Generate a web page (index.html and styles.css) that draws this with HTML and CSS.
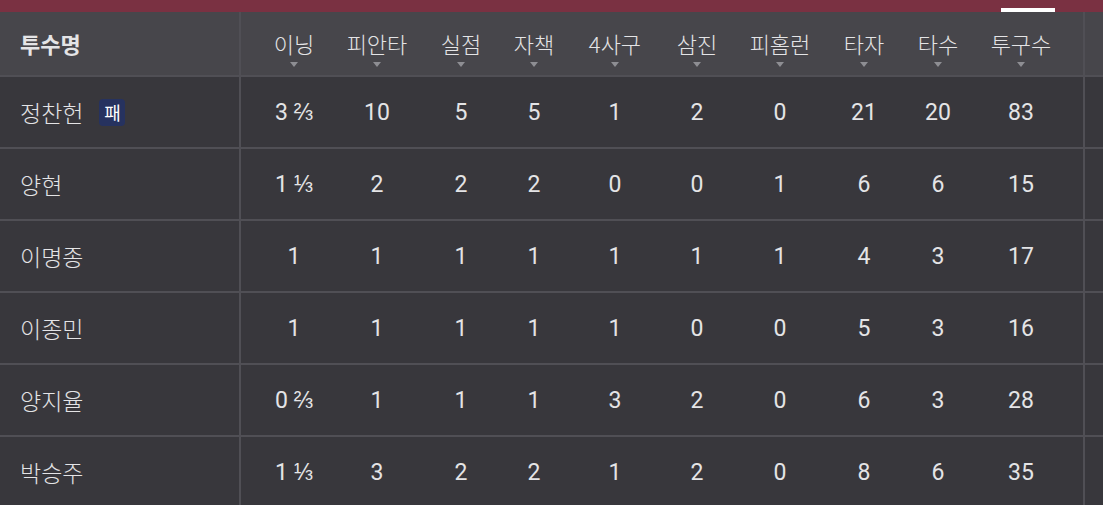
FILE: index.html
```html
<!DOCTYPE html>
<html lang="ko">
<head>
  <meta charset="UTF-8">
  <meta name="viewport" content="width=device-width, initial-scale=1.0">
  <title>투수 기록</title>
  <link rel="stylesheet" href="styles.css">
</head>
<body>
  <!-- 상단 탭 바 -->
  <div class="tabbar">
    <span class="tab-activo"></span>
  </div>

  <div class="tabla">
    <div class="fila cabecera">
      <div class="celda nombre">투수명</div>
      <div class="celda">이닝<span class="flecha"></span></div>
      <div class="celda">피안타<span class="flecha"></span></div>
      <div class="celda">실점<span class="flecha"></span></div>
      <div class="celda">자책<span class="flecha"></span></div>
      <div class="celda">4사구<span class="flecha"></span></div>
      <div class="celda">삼진<span class="flecha"></span></div>
      <div class="celda">피홈런<span class="flecha"></span></div>
      <div class="celda">타자<span class="flecha"></span></div>
      <div class="celda">타수<span class="flecha"></span></div>
      <div class="celda">투구수<span class="flecha"></span></div>
      <div class="celda vacia"></div>
      <div class="celda resto"></div>
    </div>

    <div class="fila">
      <div class="celda nombre">정찬헌 <span class="badge">패</span></div>
      <div class="celda">3 ⅔</div>
      <div class="celda">10</div>
      <div class="celda">5</div>
      <div class="celda">5</div>
      <div class="celda">1</div>
      <div class="celda">2</div>
      <div class="celda">0</div>
      <div class="celda">21</div>
      <div class="celda">20</div>
      <div class="celda">83</div>
      <div class="celda vacia"></div>
      <div class="celda resto"></div>
    </div>

    <div class="fila">
      <div class="celda nombre">양현</div>
      <div class="celda">1 ⅓</div>
      <div class="celda">2</div>
      <div class="celda">2</div>
      <div class="celda">2</div>
      <div class="celda">0</div>
      <div class="celda">0</div>
      <div class="celda">1</div>
      <div class="celda">6</div>
      <div class="celda">6</div>
      <div class="celda">15</div>
      <div class="celda vacia"></div>
      <div class="celda resto"></div>
    </div>

    <div class="fila">
      <div class="celda nombre">이명종</div>
      <div class="celda">1</div>
      <div class="celda">1</div>
      <div class="celda">1</div>
      <div class="celda">1</div>
      <div class="celda">1</div>
      <div class="celda">1</div>
      <div class="celda">1</div>
      <div class="celda">4</div>
      <div class="celda">3</div>
      <div class="celda">17</div>
      <div class="celda vacia"></div>
      <div class="celda resto"></div>
    </div>

    <div class="fila">
      <div class="celda nombre">이종민</div>
      <div class="celda">1</div>
      <div class="celda">1</div>
      <div class="celda">1</div>
      <div class="celda">1</div>
      <div class="celda">1</div>
      <div class="celda">0</div>
      <div class="celda">0</div>
      <div class="celda">5</div>
      <div class="celda">3</div>
      <div class="celda">16</div>
      <div class="celda vacia"></div>
      <div class="celda resto"></div>
    </div>

    <div class="fila">
      <div class="celda nombre">양지율</div>
      <div class="celda">0 ⅔</div>
      <div class="celda">1</div>
      <div class="celda">1</div>
      <div class="celda">1</div>
      <div class="celda">3</div>
      <div class="celda">2</div>
      <div class="celda">0</div>
      <div class="celda">6</div>
      <div class="celda">3</div>
      <div class="celda">28</div>
      <div class="celda vacia"></div>
      <div class="celda resto"></div>
    </div>

    <div class="fila">
      <div class="celda nombre">박승주</div>
      <div class="celda">1 ⅓</div>
      <div class="celda">3</div>
      <div class="celda">2</div>
      <div class="celda">2</div>
      <div class="celda">1</div>
      <div class="celda">2</div>
      <div class="celda">0</div>
      <div class="celda">8</div>
      <div class="celda">6</div>
      <div class="celda">35</div>
      <div class="celda vacia"></div>
      <div class="celda resto"></div>
    </div>
  </div>
</body>
</html>
```

FILE: styles.css
```css
/* Estilos globales */
*{
    box-sizing: border-box;
}
body{
    margin: 0;
    background-color: #38373c;
    color: #e4e4e6;
    font-family: 'Roboto', 'Noto Sans CJK KR', sans-serif;
    overflow: hidden;
}

/* Barra superior */
.tabbar{
    height: 12px;
    background-color: #7a3142;
    display: flex;
    justify-content: flex-end;
    align-items: flex-end;
    padding-right: 48px;
}
.tab-activo{
    width: 54px;
    height: 4px;
    background-color: #ffffff;
}

/* Tabla */
.fila{
    display: grid;
    grid-template-columns: 241px 94px 84px 84px 62px 100px 64px 102px 66px 82px 84px 22px 1fr;
    height: 72px;
    border-bottom: 2px solid #504f55;
}
.celda{
    display: flex;
    align-items: center;
    justify-content: center;
    font-size: 23px;
    font-family: 'Roboto', 'Noto Sans CJK KR', sans-serif;
}
.celda:nth-child(2){
    padding-left: 12px;
}
.celda.nombre{
    justify-content: flex-start;
    padding-left: 20px;
    border-right: 2px solid #504f55;
    font-family: 'Noto Sans CJK KR', sans-serif;
    font-weight: 300;
    font-size: 23px;
}
.celda.vacia{
    border-right: 2px solid #504f55;
}

/* Cabecera */
.cabecera{
    height: 65px;
    background-color: #47464b;
}
.cabecera .celda{
    flex-direction: column;
    font-family: 'Noto Sans CJK KR', sans-serif;
    font-weight: 300;
    font-size: 22px;
    padding-top: 6px;
}
.cabecera .celda.nombre{
    flex-direction: row;
    font-weight: bold;
    font-size: 22px;
    padding-top: 0;
    padding-bottom: 2px;
}
.cabecera .celda.vacia,
.cabecera .celda.resto{
    padding-top: 0;
}
.flecha{
    width: 0;
    height: 0;
    margin-top: 3px;
    border-left: 4px solid transparent;
    border-right: 4px solid transparent;
    border-top: 5px solid #8e8e93;
}

/* Insignia de derrota */
.badge{
    display: inline-flex;
    align-items: center;
    justify-content: center;
    width: 26px;
    height: 27px;
    margin-left: 16px;
    border-radius: 4px;
    background-color: #26325f;
    color: #ffffff;
    font-size: 18px;
    font-weight: 400;
}
```
